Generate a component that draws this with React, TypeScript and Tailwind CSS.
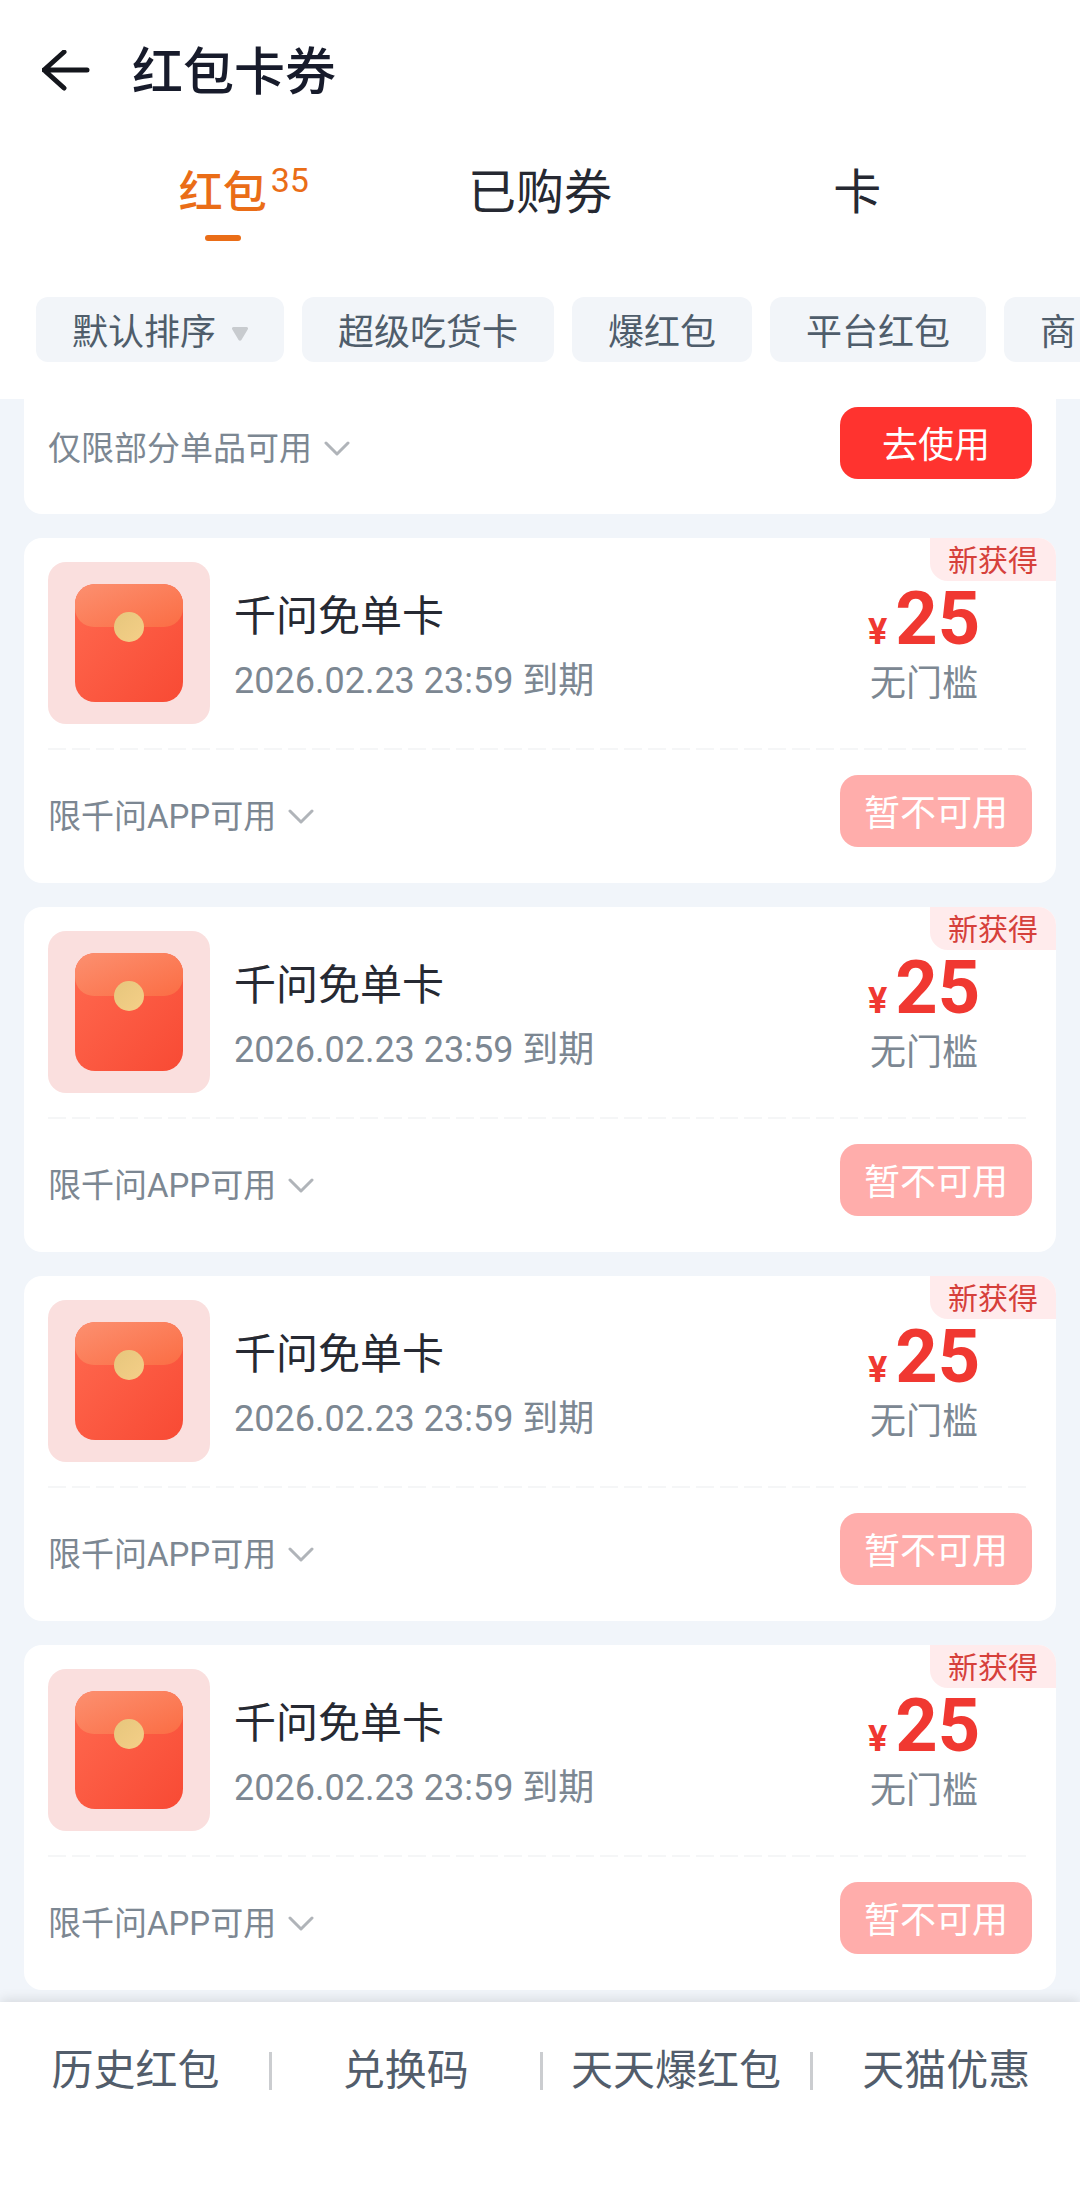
import React from "react";

interface ICoupon {
    id: number;
    title: string;
    expire: string;
    amount: number;
    threshold: string;
    limit: string;
}

const tabs = [
    { label: "红包", count: 35 },
    { label: "已购券" },
    { label: "卡" },
];

const filters = ["超级吃货卡", "爆红包", "平台红包", "商"];

const links = ["历史红包", "兑换码", "天天爆红包", "天猫优惠"];

const coupons: ICoupon[] = [1, 2, 3, 4].map((id) => ({
    id,
    title: "千问免单卡",
    expire: "2026.02.23 23:59 到期",
    amount: 25,
    threshold: "无门槛",
    limit: "限千问APP可用",
}));

function BackIcon() {
    return (
        <svg width="50" height="42" viewBox="0 0 50 42" fill="none" stroke="#14161c" strokeWidth="5" strokeLinecap="round" strokeLinejoin="round">
            <path d="M22 2L2 20l20 18M2 20h43" />
        </svg>
    );
}

function ChevronIcon() {
    return (
        <svg width="26" height="16" viewBox="0 0 26 16" fill="none" stroke="#b0b4b9" strokeWidth="3" strokeLinecap="round" strokeLinejoin="round">
            <path d="M2 2l11 11L24 2" />
        </svg>
    );
}

function EnvelopeIcon() {
    return (
        <svg className="size-[162px] shrink-0 rounded-[18px] bg-[#fadfde]" viewBox="0 0 162 162">
            <defs>
                <linearGradient id="body" x1="0" y1="0" x2="1" y2="1">
                    <stop offset="0" stopColor="#ff6a50" />
                    <stop offset="1" stopColor="#f84a34" />
                </linearGradient>
                <linearGradient id="flap" x1="0" y1="0" x2="1" y2="1">
                    <stop offset="0" stopColor="#fc9070" />
                    <stop offset="1" stopColor="#fb6d44" />
                </linearGradient>
                <linearGradient id="coin" x1="0" y1="0" x2="1" y2="1">
                    <stop offset="0" stopColor="#e6c67c" />
                    <stop offset="1" stopColor="#f5cf88" />
                </linearGradient>
            </defs>
            <rect x="27" y="22" width="108" height="118" rx="20" fill="url(#body)" />
            <path d="M47 22h68a20 20 0 0 1 20 20v4a19 19 0 0 1-19 19H46a19 19 0 0 1-19-19v-4a20 20 0 0 1 20-20z" fill="url(#flap)" />
            <circle cx="81" cy="65" r="15" fill="url(#coin)" />
        </svg>
    );
}

function LimitRow({ text, usable }: { text: string; usable?: boolean }) {
    return (
        <div className="flex items-center justify-between">
            <button type="button" className="flex items-center gap-3 pt-3 text-[33px] leading-[48px] text-[#7c8792]">
                {text}
                <ChevronIcon />
            </button>
            {usable ? (
                <button type="button" className="h-[72px] w-48 rounded-[18px] bg-[#ff332f] pt-[6px] text-4xl text-white">
                    去使用
                </button>
            ) : (
                <button type="button" disabled className="h-[72px] w-48 rounded-[18px] bg-[#ffadab] pt-[6px] text-4xl text-white">
                    暂不可用
                </button>
            )}
        </div>
    );
}

function CouponCard({ coupon }: { coupon: ICoupon }) {
    return (
        <li className="relative overflow-hidden rounded-[18px] bg-white px-6 pt-6 pb-9">
            <span className="absolute top-0 right-0 rounded-bl-[18px] bg-[#ffebec] px-[18px] pt-[3px] text-3xl leading-10 text-[#d6403b]">
                新获得
            </span>
            <div className="flex items-center">
                <EnvelopeIcon />
                <div className="ml-6 flex-1 pt-3">
                    <h2 className="text-[42px] leading-[60px] text-[#262932]">{coupon.title}</h2>
                    <p className="mt-1 text-4xl leading-[60px] text-[#7c8792]">{coupon.expire}</p>
                </div>
                <div className="w-[216px] pt-1 text-center">
                    <p className="text-[74px] leading-[72px] font-bold text-[#f03831]">
                        <span className="mr-2 text-4xl">¥</span>
                        {coupon.amount}
                    </p>
                    <p className="mt-[6px] text-4xl leading-[46px] text-[#7c8792]">{coupon.threshold}</p>
                </div>
            </div>
            <div className="mt-6 mb-[25px] h-[2px] bg-[repeating-linear-gradient(to_right,#f5f6f7_0_18px,transparent_18px_24px)]" />
            <LimitRow text={coupon.limit} />
        </li>
    );
}

function App() {
    return (
        <div className="flex min-h-screen flex-col overflow-hidden bg-[#f1f5fa] font-['Roboto','Noto_Sans_CJK_SC',sans-serif]">
            <header className="bg-white pb-[37px]">
                <div className="flex items-center gap-10 px-[42px] pt-8">
                    <button type="button" aria-label="返回">
                        <BackIcon />
                    </button>
                    <h1 className="pt-1 text-[51px] leading-[74px] font-medium text-[#171b2b]">红包卡券</h1>
                </div>
                <nav className="mt-[50px] flex px-16">
                    {tabs.map((tab, index) => (
                        <button type="button" key={tab.label} className="flex flex-1 flex-col items-center">
                            {index === 0 ? (
                                <span className="relative text-[44px] leading-[66px] font-medium text-[#ea6d17]">
                                    {tab.label}
                                    <sup className="absolute top-0 left-full ml-1 text-[34px] leading-10 font-normal">{tab.count}</sup>
                                </span>
                            ) : (
                                <span className="text-5xl leading-[66px] text-[#262932]">{tab.label}</span>
                            )}
                            {index === 0 && <span className="mt-[9px] h-[6px] w-9 rounded-full bg-[#ea6d17]" />}
                        </button>
                    ))}
                </nav>
                <div className="mt-14 flex gap-[18px] overflow-hidden pl-9 text-4xl leading-[57px] whitespace-nowrap text-[#4f5d6b]">
                    <button type="button" className="flex shrink-0 items-center gap-4 rounded-xl bg-[#f2f5f9] px-9 pt-2">
                        默认排序
                        <svg width="16" height="14" viewBox="0 0 16 14" fill="#c8cbcf">
                            <path d="M1.5 0h13a1.5 1.5 0 0 1 1.2 2.4L9.4 13a1.6 1.6 0 0 1-2.8 0L.3 2.4A1.5 1.5 0 0 1 1.5 0z" />
                        </svg>
                    </button>
                    {filters.map((filter) => (
                        <button type="button" key={filter} className="shrink-0 rounded-xl bg-[#f2f5f9] px-9 pt-2">
                            {filter}
                        </button>
                    ))}
                </div>
            </header>

            <main className="flex-1 px-6 pb-3">
                <ul className="flex flex-col gap-6">
                    <li className="rounded-b-[18px] bg-white px-6 pt-2 pb-[35px]">
                        <LimitRow text="仅限部分单品可用" usable />
                    </li>
                    {coupons.map((coupon) => (
                        <CouponCard key={coupon.id} coupon={coupon} />
                    ))}
                </ul>
            </main>

            <footer className="flex bg-white pt-[37px] pb-[95px] pl-[2px] shadow-[0_-2px_12px_rgba(0,0,0,0.12)]">
                {links.map((link, index) => (
                    <React.Fragment key={link}>
                        {index > 0 && <span className="my-auto h-[38px] w-[3px] bg-[#cbcdd0]" />}
                        <a href="#" className="flex-1 text-center text-[42px] leading-[64px] whitespace-nowrap text-[#525d6b]">
                            {link}
                        </a>
                    </React.Fragment>
                ))}
            </footer>
        </div>
    );
}

export default App;
